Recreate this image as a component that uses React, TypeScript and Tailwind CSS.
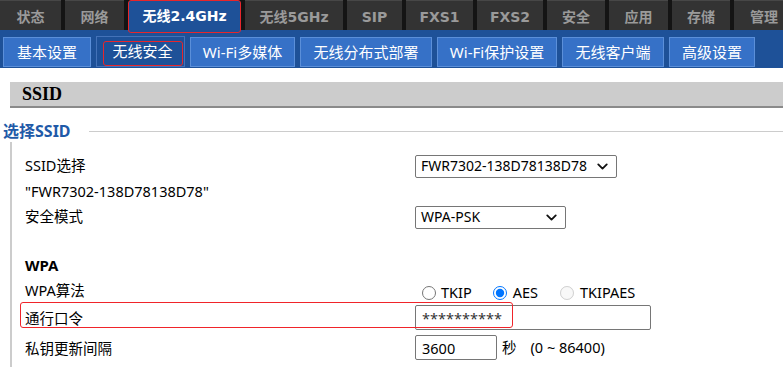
import { ChevronDown } from "lucide-react";

const topTabs = [
  { label: "状态", w: "w-[61px]" },
  { label: "网络", w: "w-[59px]" },
  { label: "无线2.4GHz", w: "w-[113px]", active: true },
  { label: "无线5GHz", w: "w-[98px]" },
  { label: "SIP", w: "w-[55px]" },
  { label: "FXS1", w: "w-[67px]" },
  { label: "FXS2", w: "w-[66px]" },
  { label: "安全", w: "w-[58px]" },
  { label: "应用", w: "w-[59px]" },
  { label: "存储", w: "w-[58px]" },
  { label: "管理", w: "w-[60px]" },
];

const subTabs = [
  { label: "基本设置", w: "w-[88px]" },
  { label: "无线安全", w: "w-[89px]", active: true },
  { label: "Wi-Fi多媒体", w: "w-[105px]" },
  { label: "无线分布式部署", w: "w-[132px]" },
  { label: "Wi-Fi保护设置", w: "w-[120px]" },
  { label: "无线客户端", w: "w-[102px]" },
  { label: "高级设置", w: "w-[86px]" },
];

const cn = "font-['Noto_Sans','Noto_Sans_CJK_SC',sans-serif]";

function FakeSelect({ value, w }: { value: string; w: string }) {
  return (
    <div
      className={`flex h-[23px] ${w} items-center justify-between rounded-[2px] border border-[#767676] bg-white pl-[5px] pr-[5px] text-[14px] text-black`}
    >
      <span className="whitespace-nowrap leading-none">{value}</span>
      <ChevronDown size={17} strokeWidth={2.6} className="shrink-0 text-[#111]" />
    </div>
  );
}

export default function App() {
  return (
    <div className={`h-[367px] w-[783px] overflow-hidden bg-white ${cn}`}>
      {/* top tabs */}
      <div className="flex h-[30px] items-start gap-[4px] bg-[#141414]">
        {topTabs.map((t) =>
          t.active ? (
            <div
              key={t.label}
              className={`relative z-10 flex h-[33px] ${t.w} shrink-0 items-center justify-center rounded-[3px] border border-[#e8262b] bg-[#1e5198] font-['DejaVu_Sans','Noto_Sans_CJK_SC',sans-serif] text-[14px] font-bold text-white`}
            >
              {t.label}
            </div>
          ) : (
            <div
              key={t.label}
              className={`flex h-[30px] ${t.w} shrink-0 items-center justify-center border-t border-[#474747] bg-[#333333] pt-[3px] font-['DejaVu_Sans','Noto_Sans_CJK_SC',sans-serif] text-[14px] font-bold text-[#9a9a9a]`}
            >
              {t.label}
            </div>
          )
        )}
      </div>

      {/* sub tabs */}
      <div className="flex h-[38px] items-end gap-[5px] bg-[#1e5198] pb-[1px] pl-[3px]">
        {subTabs.map((t) =>
          t.active ? (
            <div
              key={t.label}
              className={`relative flex h-[31px] ${t.w} shrink-0 items-center justify-center border border-[#4472b8] bg-[#1e5198] pl-[4px] text-[15px] text-white`}
            >
              <div className="absolute bottom-[0px] left-[6px] right-[1px] top-[4px] rounded-[3px] border border-[#e8262b]" />
              {t.label}
            </div>
          ) : (
            <div
              key={t.label}
              className={`flex h-[30px] ${t.w} shrink-0 items-center justify-center border border-[#5b8fd9] bg-[#3671c7] text-[15px] text-white`}
            >
              {t.label}
            </div>
          )
        )}
      </div>

      {/* SSID header */}
      <div className="ml-[10px] mt-[14px] flex h-[26px] items-center border-b-2 border-[#8a8a8a] bg-[#cccccc] pl-[12px] font-['Liberation_Serif',serif] text-[18px] font-bold text-black">
        SSID
      </div>

      {/* legend */}
      <div className="mt-[12px] flex h-[22px] items-center">
        <span className="pl-[3px] text-[16px] font-bold text-[#1f5aa8]">选择SSID</span>
        <div className="ml-[18px] h-px flex-1 bg-[#cccccc]" />
      </div>

      {/* fieldset body */}
      <div className="ml-[10px] h-[300px] border-l-2 border-[#cccccc] pt-[11px] text-[14.5px] text-black">
        <div className="grid h-[26px] grid-cols-[390px_1fr] items-center pl-[13px]">
          <span>SSID选择</span>
          <FakeSelect value="FWR7302-138D78138D78" w="w-[202px]" />
        </div>
        <div className="flex h-[26px] items-center pl-[13px]">
          <span>"FWR7302-138D78138D78"</span>
        </div>
        <div className="grid h-[24px] grid-cols-[390px_1fr] items-center pl-[13px]">
          <span>安全模式</span>
          <FakeSelect value="WPA-PSK" w="w-[151px]" />
        </div>

        <div className="mt-[24px] flex h-[24px] items-center pl-[13px] text-[15px] font-bold">WPA</div>

        <div className="grid h-[24px] grid-cols-[390px_1fr] items-center pl-[13px]">
          <span>WPA算法</span>
          <div className="flex items-center pt-[5px]">
            <input type="radio" name="alg" className="ml-[7px] h-[14px] w-[14px]" />
            <span className="ml-[5px]">TKIP</span>
            <input type="radio" name="alg" defaultChecked className="ml-[21px] h-[14px] w-[14px] accent-[#0075ff]" />
            <span className="ml-[6px]">AES</span>
            <input type="radio" name="alg" disabled className="ml-[22px] h-[14px] w-[14px]" />
            <span className="ml-[6px]">TKIPAES</span>
          </div>
        </div>

        <div className="relative mt-[3px] grid h-[27px] grid-cols-[390px_1fr] items-center pl-[13px]">
          <div className="pointer-events-none absolute left-[8px] top-[-2px] z-10 h-[26px] w-[493px] rounded-[3px] border border-[#f0242a]" />
          <span className="pt-[3px]">通行口令</span>
          <input
            type="text"
            readOnly
            value="**********"
            className="h-[25px] w-[236px] rounded-[2px] border border-[#767676] pl-[6px] text-[14.5px] text-[#333]"
          />
        </div>

        <div className="mt-[3px] grid h-[27px] grid-cols-[390px_1fr] items-center pl-[13px]">
          <span className="pt-[2px]">私钥更新间隔</span>
          <div className="flex items-center">
            <input
              type="text"
              readOnly
              value="3600"
              className="h-[25px] w-[82px] rounded-[2px] border border-[#767676] pl-[6px] text-[14.5px]"
            />
            <span className="ml-[5px]">秒</span>
            <span className="ml-[14px]">(0 ~ 86400)</span>
          </div>
        </div>
      </div>
    </div>
  );
}
